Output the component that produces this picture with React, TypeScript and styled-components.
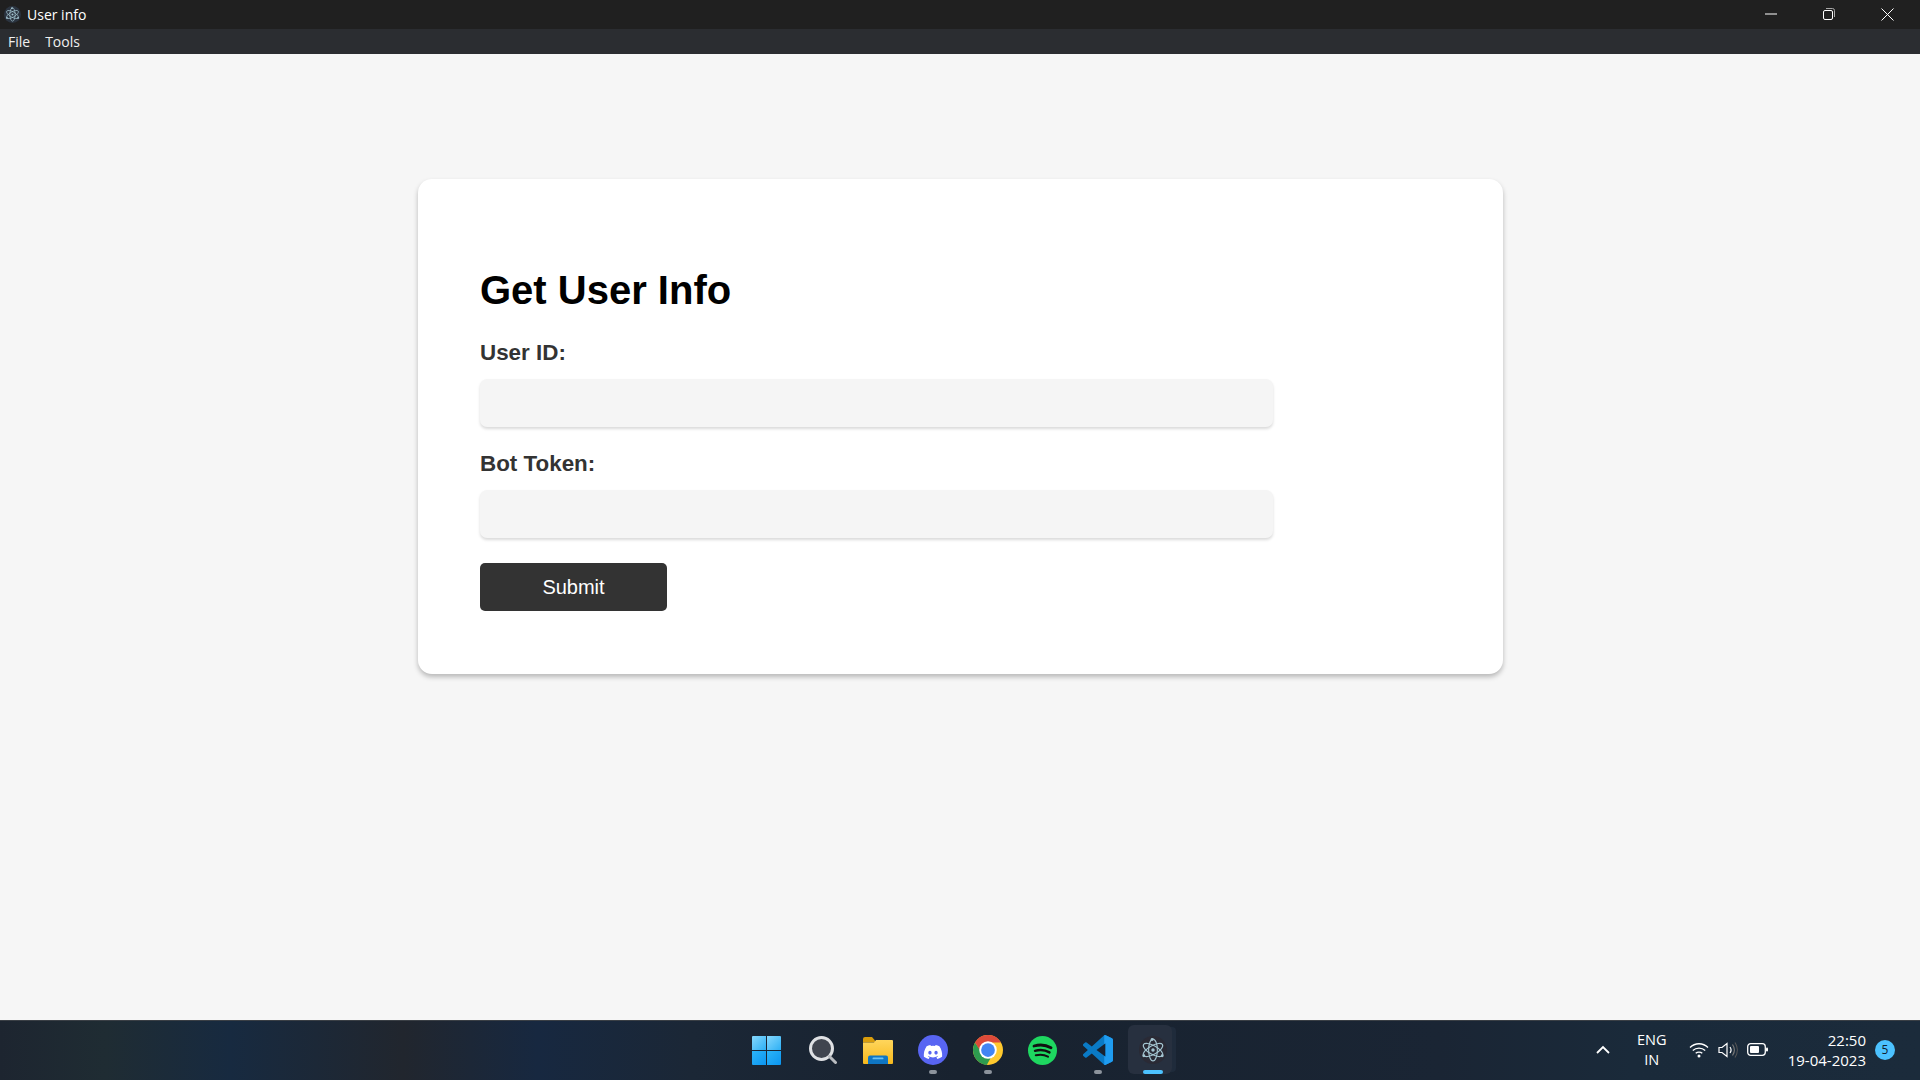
import React from "react";
import styled, { createGlobalStyle } from "styled-components";
import { FaDiscord } from "react-icons/fa";

const Global = createGlobalStyle`
  html, body { margin: 0; padding: 0; height: 100%; background: #f6f6f6; overflow: hidden; }
  * { box-sizing: border-box; }
`;

const Screen = styled.div`
  width: 1920px; height: 1080px; display: flex; flex-direction: column;
  font-family: "Liberation Sans", Arial, sans-serif; background: #f6f6f6;
`;
const TitleBar = styled.div`
  height: 29px; background: #202020; display: flex; align-items: center; flex-shrink: 0; padding-right: 4px;
  color: #fff; font: 14px/29px "Open Sans", "Noto Sans", sans-serif;
`;
const AppIconSlot = styled.span`
  width: 27px; display: flex; justify-content: center; padding-right: 3px;
`;
const TitleText = styled.span`flex: 1;`;
const WindowButton = styled.button`
  width: 58px; height: 29px; border: 0; background: transparent; padding: 0 0 1px;
  display: flex; align-items: center; justify-content: center; color: #fff;
`;
const MenuBar = styled.div`
  height: 25px; background: #2b2d31; display: flex; align-items: center; gap: 15px; padding-left: 8px; flex-shrink: 0;
`;
const MenuItem = styled.span`
  color: #f0f0f0; font: 14px/25px "Open Sans", "Noto Sans", sans-serif;
`;
const Main = styled.main`
  flex: 1; display: flex; justify-content: center; align-items: flex-start; padding-top: 125px;
`;
const Card = styled.form`
  width: 1085px; height: 495px; background: #fff; border-radius: 14px; padding: 88px 62px 0;
  box-shadow: 0 3px 5px rgba(0,0,0,.25); display: flex; flex-direction: column; margin-left: 1px;
`;
const Heading = styled.h1`
  margin: 0; font-size: 40px; line-height: 46px; font-weight: 700; color: #000; height: 73px;
`;
const FieldLabel = styled.label`
  font-size: 22.4px; line-height: 26px; font-weight: 700; color: #333; display: block; margin-bottom: 13px;
`;
const TextInput = styled.input`
  width: 793px; height: 48px; border: 0; border-radius: 7px; background: #f5f5f5; outline: none;
  box-shadow: 0 2px 3px rgba(0,0,0,.15); margin-bottom: 24px; display: block; padding: 0 14px;
`;
const SubmitButton = styled.button`
  width: 187px; height: 48px; margin-top: 1px; border: 0; border-radius: 5px; background: #333; color: #fff;
  font: 20px "Liberation Sans", Arial, sans-serif; padding: 0;
`;
const Taskbar = styled.footer`
  height: 60px; flex-shrink: 0; position: relative; display: flex; justify-content: center;
  background: linear-gradient(90deg, #1d2530 0%, #1f2c33 5.500%, #172a40 12%, #21262e 21%, #172840 28%, #1b2736 36%, #18222f 50%, #1a2534 75%, #1a2a3a 85%, #1b2b3b 100%);
  border-top: 1px solid #3a3f45;
`;
const IconRow = styled.div`
  display: grid; grid-template-columns: repeat(8, 55px);
`;
const Slot = styled.div<{ $active?: boolean }>`
  position: relative; height: 59px; padding-bottom: 1px; display: flex; align-items: center; justify-content: center;
  ${p => p.$active ? `
    &::before { content: ""; position: absolute; left: 3px; right: 8px; top: 4px; bottom: 6px; border-radius: 6px;
      background: #27303f; box-shadow: 6px 0 0 -2px #1f2b3b; }
  ` : ""}
  & > svg { position: relative; }
`;
const RunDot = styled.span<{ $active?: boolean }>`
  position: absolute; bottom: 6px; left: 50%; transform: translateX(-50%);
  width: ${p => p.$active ? 20 : 8}px; height: 4px; border-radius: 2px; background: ${p => p.$active ? "#4cc2ff" : "#8c939c"};
`;
const Tray = styled.div`
  position: absolute; right: 0; top: 0; height: 59px; padding-bottom: 2px; display: flex; align-items: center;
  color: #fff; font: 14.5px/20px "Open Sans", "Noto Sans", sans-serif;
`;
const Lang = styled.div`
  width: 40px; text-align: center; margin: 0 17px 0 22px;
`;
const TrayIcons = styled.div`
  display: flex; align-items: center; gap: 9px; margin-right: 20px;
`;
const Clock = styled.div`text-align: right; font-size: 15px;`;
const Badge = styled.span`
  width: 20px; height: 20px; border-radius: 50%; background: #4cc2ff; color: #10202e; font-size: 12px; line-height: 20px;
  text-align: center; margin: 0 25px 0 9px;
`;
const WinSvg = styled.svg`
  margin-right: 2px;
`;

const ElectronIcon = ({ size, bg }: { size: number; bg: string }) => (
  <svg width={size} height={size} viewBox="0 0 32 32">
    <circle cx="16" cy="16" r="16" fill={bg} />
    <g fill="none" stroke="#a3c4d0" strokeWidth="1.300">
      <ellipse cx="16" cy="16" rx="12.500" ry="5" transform="rotate(30 16 16)" />
      <ellipse cx="16" cy="16" rx="12.500" ry="5" transform="rotate(90 16 16)" />
      <ellipse cx="16" cy="16" rx="12.500" ry="5" transform="rotate(150 16 16)" />
    </g>
    <circle cx="16" cy="16" r="2" fill="#a3c4d0" />
    <circle cx="15" cy="4" r="1.700" fill="#a3c4d0" />
    <circle cx="26.500" cy="22.500" r="1.700" fill="#a3c4d0" />
    <circle cx="5.500" cy="22.500" r="1.700" fill="#a3c4d0" />
  </svg>
);

const WinLogo = () => (
  <WinSvg width="29" height="29" viewBox="0 0 29 29">
    <defs>
      <linearGradient id="w1" x1="0" y1="0" x2="1" y2="1"><stop offset="0" stopColor="#86d8fd" /><stop offset="1" stopColor="#2db0f5" /></linearGradient>
      <linearGradient id="w2" x1="0" y1="0" x2="1" y2="1"><stop offset="0" stopColor="#2cb4f8" /><stop offset="1" stopColor="#0b95f0" /></linearGradient>
    </defs>
    <path d="M1 0h13v14H0V1a1 1 0 0 1 1-1z" fill="url(#w1)" />
    <path d="M15 0h13a1 1 0 0 1 1 1v13H15z" fill="url(#w1)" />
    <path d="M0 15h14v14H1a1 1 0 0 1-1-1z" fill="url(#w2)" />
    <path d="M15 15h14v13a1 1 0 0 1-1 1H15z" fill="url(#w2)" />
  </WinSvg>
);
const SearchIcon = () => (
  <svg width="28" height="28" viewBox="0 0 28 28" fill="none">
    <circle cx="12.500" cy="12.500" r="11" fill="#40454f" stroke="#dfe1e4" strokeWidth="3" />
    <path d="M20.500 20.500 26.500 26.500" stroke="#b9bcc0" strokeWidth="3" strokeLinecap="round" />
  </svg>
);
const FolderIcon = () => (
  <svg width="30" height="27" viewBox="0 0 30 27">
    <defs>
      <linearGradient id="fo" x1="0" y1="0" x2="0" y2="1"><stop offset="0" stopColor="#ffd65c" /><stop offset="1" stopColor="#f7b91d" /></linearGradient>
    </defs>
    <path d="M0 2a2 2 0 0 1 2-2h7l3 3.500v2H0z" fill="#d99d0c" />
    <path d="M0 5.500h11l2-2.500h16a1 1 0 0 1 1 1v22a1 1 0 0 1-1 1H1a1 1 0 0 1-1-1z" fill="url(#fo)" />
    <path d="M5 27v-6.500a2 2 0 0 1 2-2h16a2 2 0 0 1 2 2V27z" fill="#0f76c4" />
    <rect x="9.500" y="20.500" width="11" height="1.800" rx=".9" fill="#6cc1f2" />
  </svg>
);
const DiscordIcon = () => (
  <svg width="30" height="30" viewBox="0 0 30 30">
    <circle cx="15" cy="15" r="15" fill="#5865f2" />
    <svg x="5" y="5" width="20" height="20" viewBox="0 0 640 640">
      <g transform="translate(0 64)"><FaDiscord color="#fff" size={640} /></g>
    </svg>
  </svg>
);
const ChromeIcon = () => (
  <svg width="30" height="30" viewBox="0 0 48 48">
    <circle cx="24" cy="24" r="24" fill="#ffc92e" />
    <path d="M3.200 12 A24 24 0 0 0 22 47.900 L32 30 L16 30 Z" fill="#2d9b4f" />
    <path d="M3.200 12 A24 24 0 0 1 44.800 12 L24 12 L14 29 Z" fill="#dd4a3a" />
    <circle cx="24" cy="24" r="14" fill="#fff" />
    <circle cx="24" cy="24" r="11" fill="#4285f4" />
  </svg>
);
const SpotifyIcon = () => (
  <svg width="29" height="29" viewBox="0 0 29 29" fill="none">
    <circle cx="14.500" cy="14.500" r="14.500" fill="#1ed760" />
    <g stroke="#111" strokeLinecap="round">
      <path d="M6 10c5.500-1.600 12-1.100 17 1.700" strokeWidth="2.800" />
      <path d="M7 14.800c4.700-1.300 10.500-.8 14.500 1.600" strokeWidth="2.400" />
      <path d="M7.800 19.300c4-1 8.700-.6 12.200 1.400" strokeWidth="2" />
    </g>
  </svg>
);
const VSCodeIcon = () => (
  <svg width="30" height="30" viewBox="0 0 24 24">
    <defs><clipPath id="vsr"><rect x="17" y="0" width="7" height="24" /></clipPath></defs>
    <path fill="#0a7ac5" fillRule="evenodd" d="M23.150 2.587L18.210.21a1.494 1.494 0 0 0-1.705.29l-9.460 8.630-4.120-3.128a.999.999 0 0 0-1.276.057L.327 7.261A1 1 0 0 0 .326 8.740L3.899 12 .326 15.260a1 1 0 0 0 .001 1.479L1.650 17.940a.999.999 0 0 0 1.276.057l4.120-3.128 9.460 8.630a1.492 1.492 0 0 0 1.704.29l4.942-2.377A1.500 1.500 0 0 0 24 20.060V3.939a1.500 1.500 0 0 0-.85-1.352zm-5.146 14.861L10.826 12l7.178-5.448v10.896z" />
    <path fill="#1f9cf0" fillRule="evenodd" clipPath="url(#vsr)" d="M23.150 2.587L18.210.21a1.494 1.494 0 0 0-1.705.29l-9.460 8.630-4.120-3.128a.999.999 0 0 0-1.276.057L.327 7.261A1 1 0 0 0 .326 8.740L3.899 12 .326 15.260a1 1 0 0 0 .001 1.479L1.650 17.940a.999.999 0 0 0 1.276.057l4.120-3.128 9.460 8.630a1.492 1.492 0 0 0 1.704.29l4.942-2.377A1.500 1.500 0 0 0 24 20.060V3.939a1.500 1.500 0 0 0-.85-1.352zm-5.146 14.861L10.826 12l7.178-5.448v10.896z" />
  </svg>
);

const Submit = (e: React.FormEvent) => e.preventDefault();

export default function App() {
  return (
    <Screen>
      <Global />
      <TitleBar>
        <AppIconSlot><ElectronIcon size={17} bg="#2b3440" /></AppIconSlot>
        <TitleText>User info</TitleText>
        <WindowButton aria-label="Minimize">
          <svg width="12" height="2" viewBox="0 0 12 2"><path d="M0 1h12" stroke="#fff" /></svg>
        </WindowButton>
        <WindowButton aria-label="Restore">
          <svg width="12" height="12" viewBox="0 0 12 12" fill="none">
            <rect x=".5" y="2.500" width="9" height="9" rx="1.500" stroke="#fff" />
            <path d="M3 .5h6.500a2 2 0 0 1 2 2V9" stroke="#aaa" />
          </svg>
        </WindowButton>
        <WindowButton aria-label="Close">
          <svg width="13" height="13" viewBox="0 0 13 13"><path d="M.5.5l12 12M12.500.5l-12 12" stroke="#fff" /></svg>
        </WindowButton>
      </TitleBar>
      <MenuBar>
        <MenuItem>File</MenuItem>
        <MenuItem>Tools</MenuItem>
      </MenuBar>
      <Main>
        <Card onSubmit={Submit}>
          <Heading>Get User Info</Heading>
          <FieldLabel htmlFor="uid">User ID:</FieldLabel>
          <TextInput id="uid" />
          <FieldLabel htmlFor="tok">Bot Token:</FieldLabel>
          <TextInput id="tok" />
          <SubmitButton type="submit">Submit</SubmitButton>
        </Card>
      </Main>
      <Taskbar>
        <IconRow>
          <Slot><WinLogo /></Slot>
          <Slot><SearchIcon /></Slot>
          <Slot><FolderIcon /></Slot>
          <Slot><DiscordIcon /><RunDot /></Slot>
          <Slot><ChromeIcon /><RunDot /></Slot>
          <Slot><SpotifyIcon /></Slot>
          <Slot><VSCodeIcon /><RunDot /></Slot>
          <Slot $active><ElectronIcon size={28} bg="#2a2a35" /><RunDot $active /></Slot>
        </IconRow>
        <Tray>
          <svg width="14" height="9" viewBox="0 0 14 9" fill="none"><path d="M1 8l6-6 6 6" stroke="#fff" strokeWidth="1.800" /></svg>
          <Lang>ENG<br />IN</Lang>
          <TrayIcons>
            <svg width="20" height="16" viewBox="0 0 20 16" fill="none" stroke="#fff" strokeWidth="1.300">
              <path d="M1 5.500c5-5 13-5 18 0" /><path d="M3.800 8.500c3.400-3.300 9-3.300 12.400 0" /><path d="M6.700 11.300c1.800-1.700 4.800-1.700 6.600 0" />
              <circle cx="10" cy="14" r="1.500" fill="#fff" stroke="none" />
            </svg>
            <svg width="20" height="18" viewBox="0 0 20 18" fill="none" stroke="#fff" strokeWidth="1.200">
              <path d="M1 6.500h3L9 2.500v13l-5-4H1z" /><path d="M12 6c1.300 1.800 1.300 4.200 0 6" />
              <path d="M14.500 3.500c2.300 3.300 2.300 7.700 0 11" stroke="#777" /><path d="M17 1.500c3 4.500 3 10.500 0 15" stroke="#555" />
            </svg>
            <svg width="21" height="13" viewBox="0 0 21 13" fill="none">
              <rect x=".7" y=".7" width="17.600" height="11.600" rx="3" stroke="#fff" strokeWidth="1.300" />
              <rect x="3" y="3" width="9" height="7" rx="1" fill="#fff" />
              <rect x="19" y="4.500" width="2" height="4" rx="1" fill="#fff" />
            </svg>
          </TrayIcons>
          <Clock>22:50<br />19-04-2023</Clock>
          <Badge>5</Badge>
        </Tray>
      </Taskbar>
    </Screen>
  );
}
